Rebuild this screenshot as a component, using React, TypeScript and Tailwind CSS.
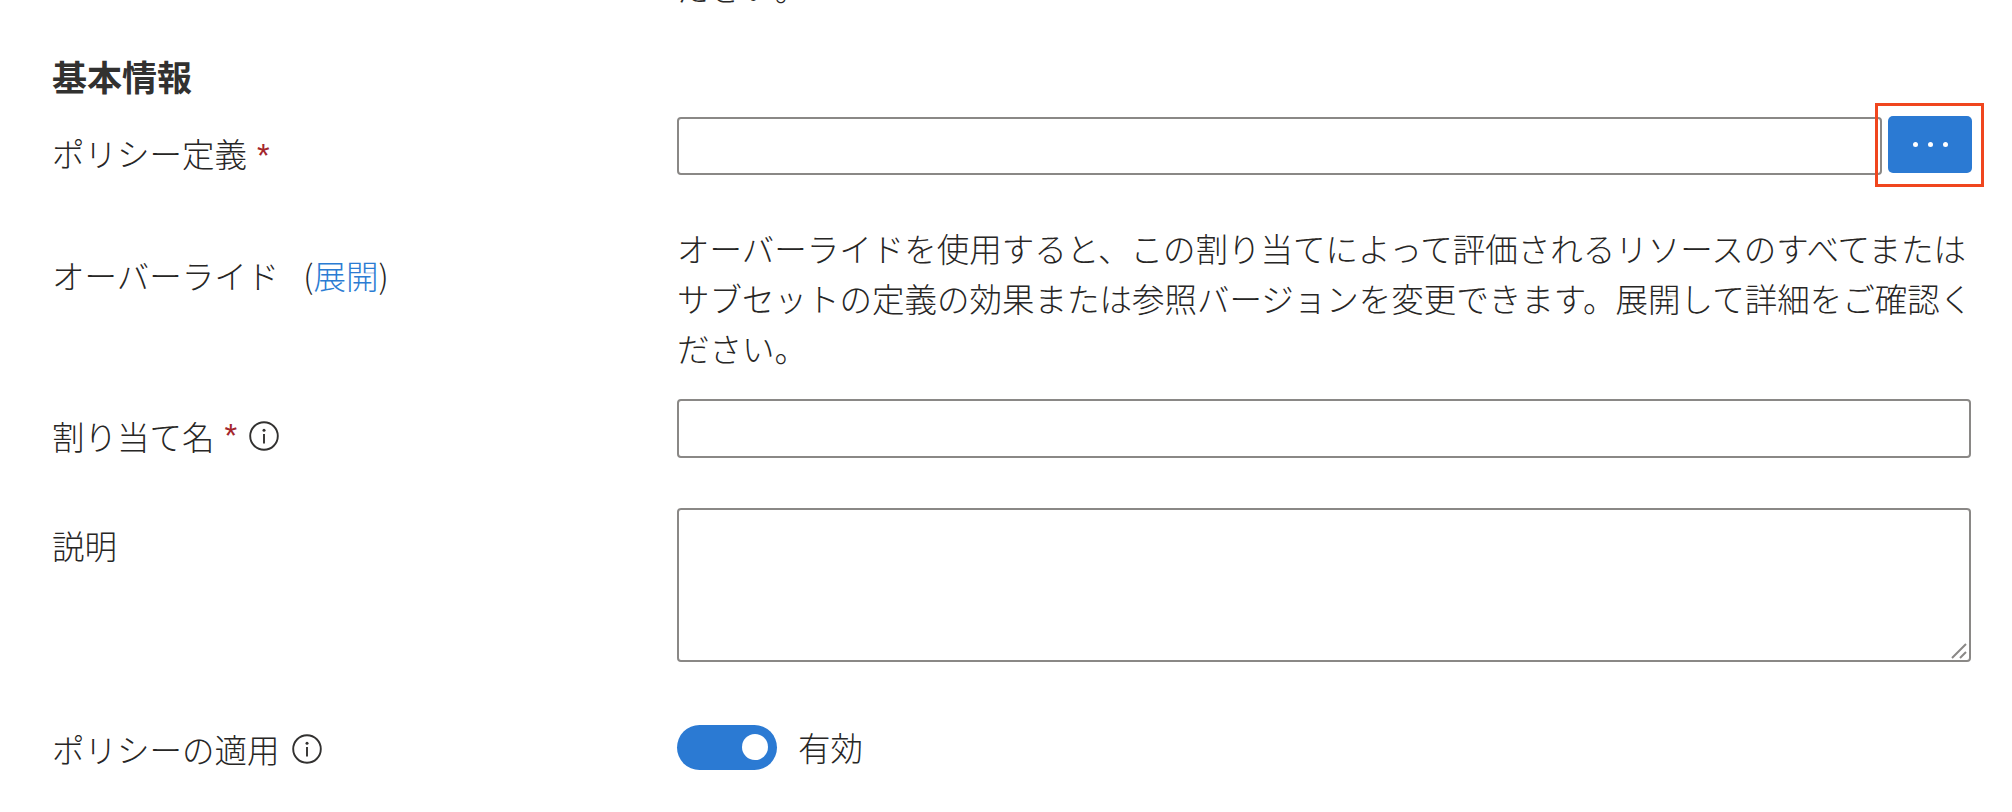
import React from 'react';

const InfoIcon: React.FC = () => (
  <svg className="shrink-0" width="30" height="30" viewBox="0 0 30 30" fill="none">
    <circle cx="15" cy="15" r="13.8" stroke="#323130" strokeWidth="1.9" />
    <circle cx="15" cy="9.2" r="1.5" fill="#323130" />
    <path d="M15 13v9.5" stroke="#323130" strokeWidth="1.9" />
  </svg>
);

const Required: React.FC = () => <span className="ml-[10px] font-['Liberation_Sans'] text-[#a4262c]">*</span>;

export default function App() {
  return (
    <div className="h-[812px] overflow-hidden bg-white pl-[52px] font-['Noto_Sans_CJK_JP',sans-serif] text-[32.5px] leading-[50px] font-light text-[#272625]">
      {/* Clipped end of the paragraph above */}
      <div className="flex h-[12px] items-end overflow-hidden pl-[625px]">
        <p className="shrink-0">ださい。</p>
      </div>

      <h2 className="mt-[39px] text-[35px] font-bold text-[#323130]">基本情報</h2>

      {/* Policy definition */}
      <div className="mt-[16px] flex">
        <div className="w-[625px] shrink-0 pt-[11px]">
          ポリシー定義
          <Required />
        </div>
        <div className="flex items-start gap-[6px]">
          <input className="h-[58px] w-[1205px] rounded-[4px] border-2 border-[#8a8886]" />
          <div className="relative">
            <button className="-mt-px flex h-[57px] w-[84px] items-center justify-center gap-[10px] rounded-[5px] bg-[#2b7ad3]">
              <span className="h-[5px] w-[5px] rounded-full bg-white" />
              <span className="h-[5px] w-[5px] rounded-full bg-white" />
              <span className="h-[5px] w-[5px] rounded-full bg-white" />
            </button>
            {/* Red highlight round the button */}
            <div className="absolute -left-[13px] -top-[14px] h-[84px] w-[109px] border-[3.5px] border-[#f0461e]" />
          </div>
        </div>
      </div>

      {/* Overrides */}
      <div className="mt-[42px] flex">
        <div className="w-[625px] shrink-0 pt-[27px]">
          オーバーライド
          <span className="ml-[24px]">
            (<a className="text-[#2b7cd3]">展開</a>)
          </span>
        </div>
        <p className="w-[1310px]">
          オーバーライドを使用すると、この割り当てによって評価されるリソースのすべてまたはサブセットの定義の効果または参照バージョンを変更できます。展開して詳細をご確認ください。
        </p>
      </div>

      {/* Assignment name */}
      <div className="mt-[26px] flex">
        <div className="flex w-[625px] shrink-0 items-center pt-[12px]">
          割り当て名
          <Required />
          <span className="ml-[12px]">
            <InfoIcon />
          </span>
        </div>
        <input className="h-[59px] w-[1294px] rounded-[4px] border-2 border-[#8a8886]" />
      </div>

      {/* Description */}
      <div className="mt-[47px] flex">
        <div className="w-[625px] shrink-0 pt-[12px]">説明</div>
        <div className="relative h-[154px] w-[1294px]">
          <textarea className="h-full w-full resize-none rounded-[4px] border-2 border-[#8a8886]" />
          {/* Resize grip */}
          <svg className="absolute bottom-[2px] right-[2px]" width="18" height="18" viewBox="0 0 18 18" fill="none">
            <path d="M1 16 15 2M9 16l6-6" stroke="#8a8886" strokeWidth="2" />
          </svg>
        </div>
      </div>

      {/* Policy enforcement */}
      <div className="mt-[58px] flex">
        <div className="flex w-[625px] shrink-0 items-center pt-[4px]">
          ポリシーの適用
          <span className="ml-[12px]">
            <InfoIcon />
          </span>
        </div>
        <div className="flex items-center gap-[21px]">
          <div className="flex h-[45px] w-[100px] items-center justify-end rounded-full bg-[#2b7ad3] pr-[9px]">
            <span className="h-[26px] w-[26px] rounded-full bg-white" />
          </div>
          <span>有効</span>
        </div>
      </div>
    </div>
  );
}
